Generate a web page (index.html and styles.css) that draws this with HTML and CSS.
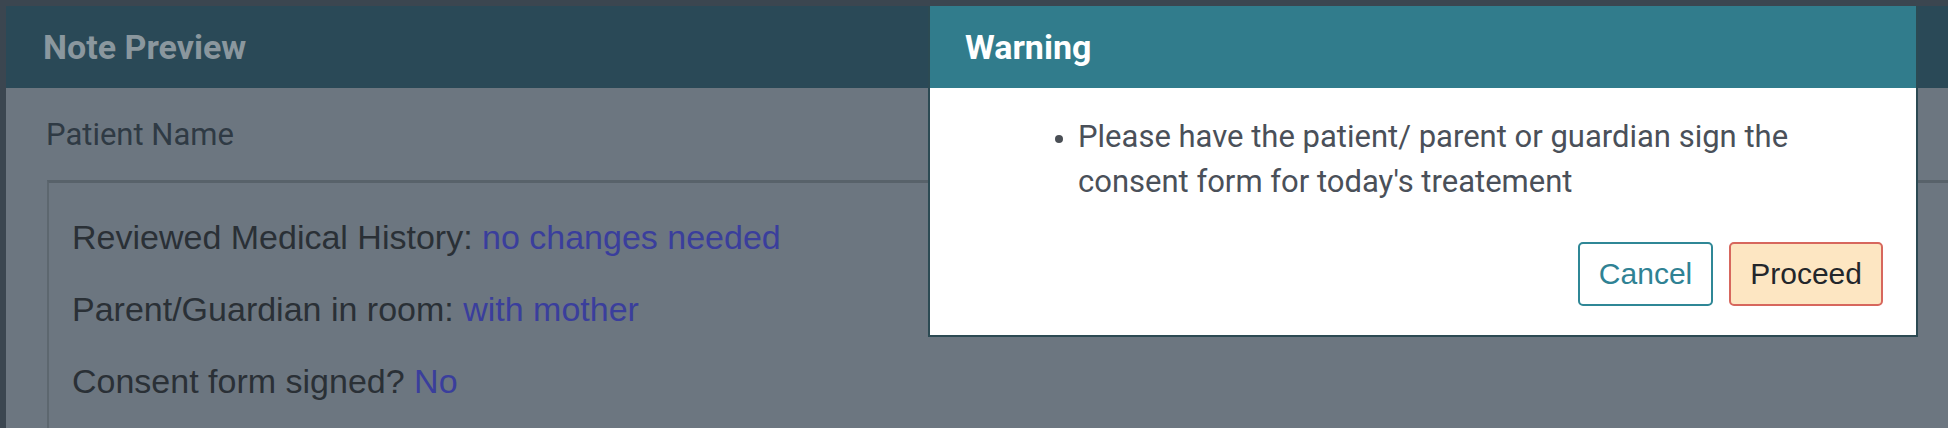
FILE: index.html
```html
<!DOCTYPE html>
<html lang="en">
<head>
<meta charset="utf-8">
<title>Note Preview</title>
<link rel="stylesheet" href="styles.css">
</head>
<body>
<div class="page">
  <section class="panel">
    <header class="panel-header">
      <h1 class="panel-title">Note Preview</h1>
    </header>
    <div class="panel-body">
      <div class="patient-name">Patient Name</div>
      <div class="note-box">
        <p class="note-line">Reviewed Medical History: <span class="value">no changes needed</span></p>
        <p class="note-line">Parent/Guardian in room: <span class="value">with mother</span></p>
        <p class="note-line">Consent form signed? <span class="value">No</span></p>
      </div>
    </div>
  </section>

  <div class="modal" role="dialog" aria-labelledby="warn-title">
    <header class="modal-header">
      <h2 class="modal-title" id="warn-title">Warning</h2>
    </header>
    <div class="modal-body">
      <ul class="modal-list">
        <li>Please have the patient/ parent or guardian sign the consent form for today's treatement</li>
      </ul>
      <div class="modal-actions">
        <button class="btn btn-cancel" type="button">Cancel</button>
        <button class="btn btn-proceed" type="button">Proceed</button>
      </div>
    </div>
  </div>
</div>
</body>
</html>
```

FILE: styles.css
```css
* {
  box-sizing: border-box;
}

html, body {
  margin: 0;
  padding: 0;
  height: 100%;
}

body {
  background: #3b4650;
  overflow: hidden;
}

.page {
  position: relative;
  height: 100%;
  padding: 6px 0 0 6px;
  display: flex;
}

.panel {
  flex: 1;
  display: flex;
  flex-direction: column;
  background: #6c7680;
  overflow: hidden;
}

.panel-header {
  flex-shrink: 0;
  height: 82px;
  background: #2a4957;
  display: flex;
  align-items: center;
  padding-left: 37px;
}

.panel-title {
  margin: 0;
  font-family: Roboto, "Liberation Sans", sans-serif;
  font-weight: 700;
  font-size: 34px;
  color: #8a979e;
}

.panel-body {
  flex: 1 0 auto;
  padding: 29px 0 0 0;
}

.patient-name {
  margin-left: 40px;
  font-family: Roboto, "Liberation Sans", sans-serif;
  font-size: 31px;
  line-height: 36px;
  color: #2f3a44;
}

.note-box {
  margin: 27px 0 0 41px;
  border-top: 3px solid #58626a;
  border-left: 2px solid #5d676f;
  padding: 36px 0 40px 23px;
  display: flex;
  flex-direction: column;
  gap: 36px;
}

.note-line {
  margin: 0;
  font-family: "Liberation Sans", Arial, sans-serif;
  font-size: 34px;
  line-height: 36px;
  color: #2a3036;
  white-space: nowrap;
}

.value {
  color: #3a3e9c;
}

/* Modal overlay */
.modal {
  position: absolute;
  left: 928px;
  top: 6px;
  width: 990px;
  height: 331px;
  background: #ffffff;
  border: 2px solid #2c4a53;
  border-top: 0;
  display: flex;
  flex-direction: column;
}

.modal-header {
  flex-shrink: 0;
  height: 82px;
  background: #317c8c;
  display: flex;
  align-items: center;
  padding-left: 35px;
}

.modal-title {
  margin: 0;
  font-family: Roboto, "Liberation Sans", sans-serif;
  font-weight: 700;
  font-size: 34px;
  color: #ffffff;
}

.modal-body {
  flex: 1;
  display: flex;
  flex-direction: column;
  padding: 26px 33px 0 0;
}

.modal-list {
  margin: 0;
  padding: 0 0 0 148px;
  max-width: 900px;
  font-family: Roboto, "Liberation Sans", sans-serif;
  font-size: 31px;
  line-height: 45px;
  color: #4a5059;
}

.modal-list li::marker {
  color: #4a4f55;
  font-size: 26px;
}

.modal-actions {
  margin-top: 38px;
  display: flex;
  justify-content: flex-end;
  gap: 16px;
}

.btn {
  height: 64px;
  padding: 0 19px;
  border-radius: 5px;
  border: 2px solid;
  font-family: "Liberation Sans", Arial, sans-serif;
  font-size: 30px;
  display: flex;
  align-items: center;
  justify-content: center;
  cursor: pointer;
}

.btn-cancel {
  background: #ffffff;
  border-color: #2f8796;
  color: #2f8294;
}

.btn-proceed {
  background: #fde6c2;
  border-color: #d7675d;
  color: #23262b;
}
```
